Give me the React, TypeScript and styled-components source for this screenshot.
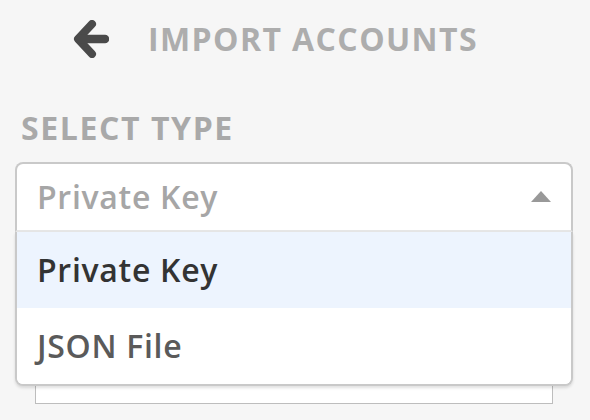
import styled, { createGlobalStyle } from "styled-components";

const GlobalStyle = createGlobalStyle`
  html, body {
    margin: 0;
    padding: 0;
    background-color: #f6f6f6;
    font-family: "Open Sans", "Liberation Sans", sans-serif;
  }
`;

const Page = styled.div`
  width: 590px;
  height: 420px;
  overflow: hidden;
  padding: 0 17px 0 15px;
  box-sizing: border-box;
`;

const Header = styled.div`
  display: flex;
  align-items: center;
  height: 77px;
  padding-left: 58px;
`;

const BackButton = styled.div`
  width: 36px;
  height: 38px;
  display: flex;
  align-items: center;
  justify-content: center;
  cursor: pointer;
`;

const Title = styled.h1`
  margin: 0 0 0 39px;
  font-size: 32px;
  font-weight: 700;
  color: #adadad;
  letter-spacing: 1.4px;
`;

const Label = styled.div`
  margin: 31px 0 0 6px;
  height: 54px;
  font-size: 32px;
  font-weight: 700;
  color: #a9a9a9;
  line-height: 40px;
  letter-spacing: 1.6px;
`;

const Field = styled.div`
  position: relative;
`;

const Control = styled.div`
  height: 68px;
  display: flex;
  align-items: center;
  justify-content: space-between;
  padding: 0 20px 2px 20px;
  box-sizing: border-box;
  height: 70px;
  background-color: #fff;
  border: 2px solid #c9c9c9;
  border-bottom: 2px solid #e6e6e6;
  border-radius: 8px 8px 0 0;
`;

const Value = styled.span`
  font-size: 32px;
  font-weight: 600;
  color: #a6a6a6;
  letter-spacing: 0.7px;
`;

const Caret = styled.span`
  width: 0;
  height: 0;
  border-left: 10px solid transparent;
  border-right: 10px solid transparent;
  border-bottom: 11px solid #999;
`;

const Menu = styled.div`
  position: absolute;
  top: 100%;
  left: 0;
  right: 0;
  z-index: 2;
  background-color: #fff;
  border: 2px solid #c9c9c9;
  border-top: none;
  border-radius: 0 0 8px 8px;
  box-shadow: 0 2px 3px rgba(0, 0, 0, 0.12);
  overflow: hidden;
`;

const Option = styled.div<{ $active?: boolean }>`
  height: 76px;
  display: flex;
  align-items: center;
  padding: 0 20px 2px;
  box-sizing: border-box;
  font-size: 32px;
  font-weight: 600;
  letter-spacing: 0.7px;
  background-color: ${(p) => (p.$active ? "#edf4fe" : "#fff")};
  color: ${(p) => (p.$active ? "#333" : "#5a5a5a")};
`;

const Input = styled.div`
  margin: 98px 20px 0;
  height: 72px;
  background-color: #fff;
  border: 1px solid #bdbdbd;
`;

const options = ["Private Key", "JSON File"];

const App = () => {
  return (
    <Page>
      <GlobalStyle />
      <Header>
        <BackButton>
          <svg width="36" height="38" viewBox="0 0 36 38">
            <path
              d="M19 4 L5 19 L19 34"
              fill="none"
              stroke="#4a4a4a"
              strokeWidth="8"
              strokeLinecap="round"
              strokeLinejoin="round"
            />
            <path
              d="M6 19 H32"
              fill="none"
              stroke="#4a4a4a"
              strokeWidth="8.5"
              strokeLinecap="round"
            />
          </svg>
        </BackButton>
        <Title>IMPORT ACCOUNTS</Title>
      </Header>
      <Label>SELECT TYPE</Label>
      <Field>
        <Control>
          <Value>Private Key</Value>
          <Caret />
        </Control>
        <Menu>
          {options.map((o, i) => (
            <Option key={o} $active={i === 0}>
              {o}
            </Option>
          ))}
        </Menu>
      </Field>
      <Input />
    </Page>
  );
};

export default App;
